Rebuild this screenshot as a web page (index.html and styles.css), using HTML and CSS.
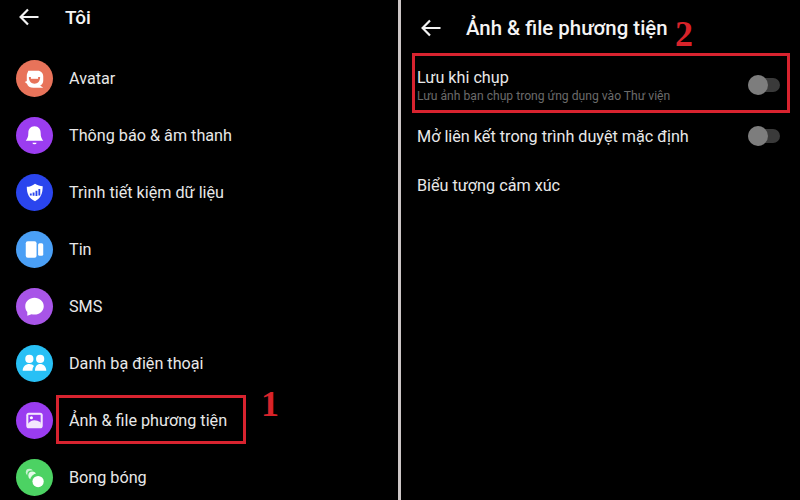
FILE: index.html
```html
<!DOCTYPE html>
<html lang="vi">
<head>
<meta charset="utf-8">
<title>Ảnh &amp; file phương tiện</title>
<link rel="stylesheet" href="styles.css">
</head>
<body>
<main class="screens">
  <section class="panel panel-left">
    <header class="head head-left">
      <svg class="back" viewBox="0 0 20 18"><path d="M9 1.500 1.600 9 9 16.500M2 9h17.500"/></svg>
      <h1 class="title title-left">Tôi</h1>
    </header>
    <ul class="menu">
      <li class="item">
        <span class="ico c-avatar"><svg viewBox="0 0 36 36"><path fill="#fff" d="M12 10.500h9c3.500 0 5.500 2.500 5.500 5.500v4c0 2.500-1 4-3 4.800l3 2.200h-9.500c-3.500 0-5.500-1.500-6.300-4l-2.200-1.500 2-1V15c0-.8.200-1.500.500-2.200z"/><path fill="#e8735a" d="M12.500 16.500h11c0 4.200-2.500 6.500-5.500 6.500s-5.500-2.300-5.500-6.500z"/><path fill="#fff" d="M14.500 16.500h7v1.800h-7z"/></svg></span>
        <span class="label">Avatar</span>
      </li>
      <li class="item">
        <span class="ico c-bell"><svg viewBox="0 0 36 36"><path fill="#fff" d="M18 9c4 0 6 3 6 6.500 0 4 1 5.500 2.500 7.500h-17c1.500-2 2.500-3.500 2.500-7.500C12 12 14 9 18 9z"/><path fill="#fff" d="M16 25h4a2 1.500 0 0 1-4 0z"/></svg></span>
        <span class="label">Thông báo &amp; âm thanh</span>
      </li>
      <li class="item">
        <span class="ico c-shield"><svg viewBox="0 0 36 36"><path fill="#fff" d="M18.500 9.500c2.500 1.600 5 2.300 7.500 2.500 0 7-2 12-7.500 14.500-6-2.500-8-7.500-8-14 3 0 5.500-1 8-3z"/><path fill="#2a45ee" d="M13.500 19h1.800v2h-1.800zM16.200 18h1.800v3.200h-1.800zM19 16.300h1.800v5h-1.800zM21.800 14.500h1.800v6.500h-1.800z"/></svg></span>
        <span class="label">Trình tiết kiệm dữ liệu</span>
      </li>
      <li class="item">
        <span class="ico c-tin"><svg viewBox="0 0 36 36"><rect fill="#fff" x="9.500" y="10" width="10.500" height="16" rx="2"/><rect fill="#fff" x="21.500" y="12" width="5" height="12" rx="1.500"/></svg></span>
        <span class="label">Tin</span>
      </li>
      <li class="item">
        <span class="ico c-sms"><svg viewBox="0 0 36 36"><path fill="#fff" d="M18 9.500c5 0 9 3.600 9 8.200s-4 8.200-9 8.200c-1 0-2-.1-2.900-.4L11 27v-3.700c-1.500-1.500-2-3.500-2-5.600 0-4.600 4-8.200 9-8.200z"/></svg></span>
        <span class="label">SMS</span>
      </li>
      <li class="item">
        <span class="ico c-contacts"><svg viewBox="0 0 36 36"><circle fill="#fff" cx="13" cy="13.500" r="4"/><circle fill="#fff" cx="23.500" cy="13.500" r="4"/><path fill="#fff" d="M6.500 25c0-4 3-6.500 6.500-6.500 2 0 3.500.7 4.500 2-1 1.200-1.500 2.800-1.500 4.500zM18.500 25c0-4 2-6.500 5-6.500s6 2.500 6 6.500z"/></svg></span>
        <span class="label">Danh bạ điện thoại</span>
      </li>
      <li class="item">
        <span class="ico c-media"><svg viewBox="0 0 36 36"><rect fill="#f3e6fd" x="10" y="10.500" width="16" height="15" rx="2.500"/><rect fill="#9a3cf0" x="12" y="12.500" width="12" height="8.500"/><circle fill="#fff" cx="15" cy="15.300" r="1.500"/><path fill="#f3e6fd" d="M12 21c3-3.800 7-4.200 12-1.200V22H12z"/></svg></span>
        <span class="label">Ảnh &amp; file phương tiện</span>
      </li>
      <li class="item">
        <span class="ico c-bubble"><svg viewBox="0 0 36 36"><circle fill="#c9f1d1" cx="13" cy="13" r="3.400"/><circle fill="#4cd263" cx="15" cy="15.200" r="4"/><circle fill="#e4f9e8" cx="15.800" cy="16" r="3.800"/><circle fill="#4cd263" cx="20.500" cy="21" r="6.800"/><circle fill="#fff" cx="21.500" cy="22" r="5.500"/></svg></span>
        <span class="label">Bong bóng</span>
      </li>
    </ul>
    <div class="mark mark-one"></div>
    <span class="num num-one">1</span>
  </section>

  <section class="panel panel-right">
    <header class="head head-right">
      <svg class="back" viewBox="0 0 20 18"><path d="M9 1.500 1.600 9 9 16.500M2 9h17.500"/></svg>
      <h1 class="title">Ảnh &amp; file phương tiện</h1>
    </header>
    <div class="setting setting-first">
      <div class="texts">
        <div class="label">Lưu khi chụp</div>
        <div class="sub">Lưu ảnh bạn chụp trong ứng dụng vào Thư viện</div>
      </div>
      <span class="switch"><span class="knob"></span></span>
    </div>
    <div class="setting setting-second">
      <div class="label">Mở liên kết trong trình duyệt mặc định</div>
      <span class="switch"><span class="knob"></span></span>
    </div>
    <div class="setting setting-third">
      <div class="label">Biểu tượng cảm xúc</div>
    </div>
    <div class="mark mark-two"></div>
    <span class="num num-two">2</span>
  </section>
</main>
</body>
</html>
```

FILE: styles.css
```css
* { box-sizing: border-box; }
html, body { margin: 0; padding: 0; }
body {
  width: 800px;
  height: 500px;
  overflow: hidden;
  background: #000;
  font-family: Roboto, "Noto Sans", sans-serif;
  color: #ededed;
}
.screens { display: flex; width: 800px; height: 500px; }
.panel { position: relative; height: 500px; overflow: hidden; background: #000; }
.panel-left { width: 398px; }
.panel-right { width: 402px; border-left: 3px solid #ccc6c6; }

.head { display: flex; align-items: center; height: 34px; }
.head-left { padding: 0 0 0 19px; }
.head-right { padding: 11px 0 0 20px; height: 44px; }
.back { width: 20px; height: 18px; flex: none; fill: none; stroke: #f2f2f2; stroke-width: 2.200; }
.title { margin: 0 0 0 25px; font-size: 20.400px; font-weight: 500; color: #f4f4f4; white-space: nowrap; }
.title-left { margin-left: 26px; font-size: 19px; }

.menu { list-style: none; margin: 0; padding: 16px 0 0 16px; }
.item { display: flex; align-items: center; height: 57px; gap: 16px; }
.ico { display: block; width: 37px; height: 37px; border-radius: 50%; flex: none; }
.ico svg { display: block; width: 100%; height: 100%; }
.c-avatar { background: #e8735a; }
.c-bell { background: #9b3df0; }
.c-shield { background: #2a45ee; }
.c-tin { background: #4a9ff5; }
.c-sms { background: #a855e8; }
.c-contacts { background: #28c0f5; }
.c-media { background: #9a3cf0; }
.c-bubble { background: #4cd263; }
.label { font-size: 16.200px; color: #e8e8e8; white-space: nowrap; }

.setting { display: flex; align-items: center; justify-content: space-between; padding: 0 20px 0 16px; }
.setting-first { height: 56px; margin-top: 13px; }
.setting-second { height: 40px; margin-top: 3px; }
.setting-third { height: 40px; margin-top: 9px; }
.sub { margin-top: 2px; font-size: 12.150px; color: #6b6b6b; white-space: nowrap; }
.switch { position: relative; display: block; width: 32px; height: 14px; border-radius: 7px; background: #3a3a3a; flex: none; }
.knob { position: absolute; left: 0; top: -3px; width: 20px; height: 20px; border-radius: 50%; background: #7d7d7d; }

.mark { position: absolute; border: 3px solid #d8232f; }
.mark-one { left: 56px; top: 395px; width: 190px; height: 49px; }
.mark-two { left: 11px; top: 53px; width: 378px; height: 60px; }
.num { position: absolute; font-family: "Liberation Serif", serif; font-weight: 700; font-size: 36px; line-height: 36px; color: #d8232a; }
.num-one { left: 261px; top: 386px; }
.num-two { left: 274px; top: 16px; }
```
